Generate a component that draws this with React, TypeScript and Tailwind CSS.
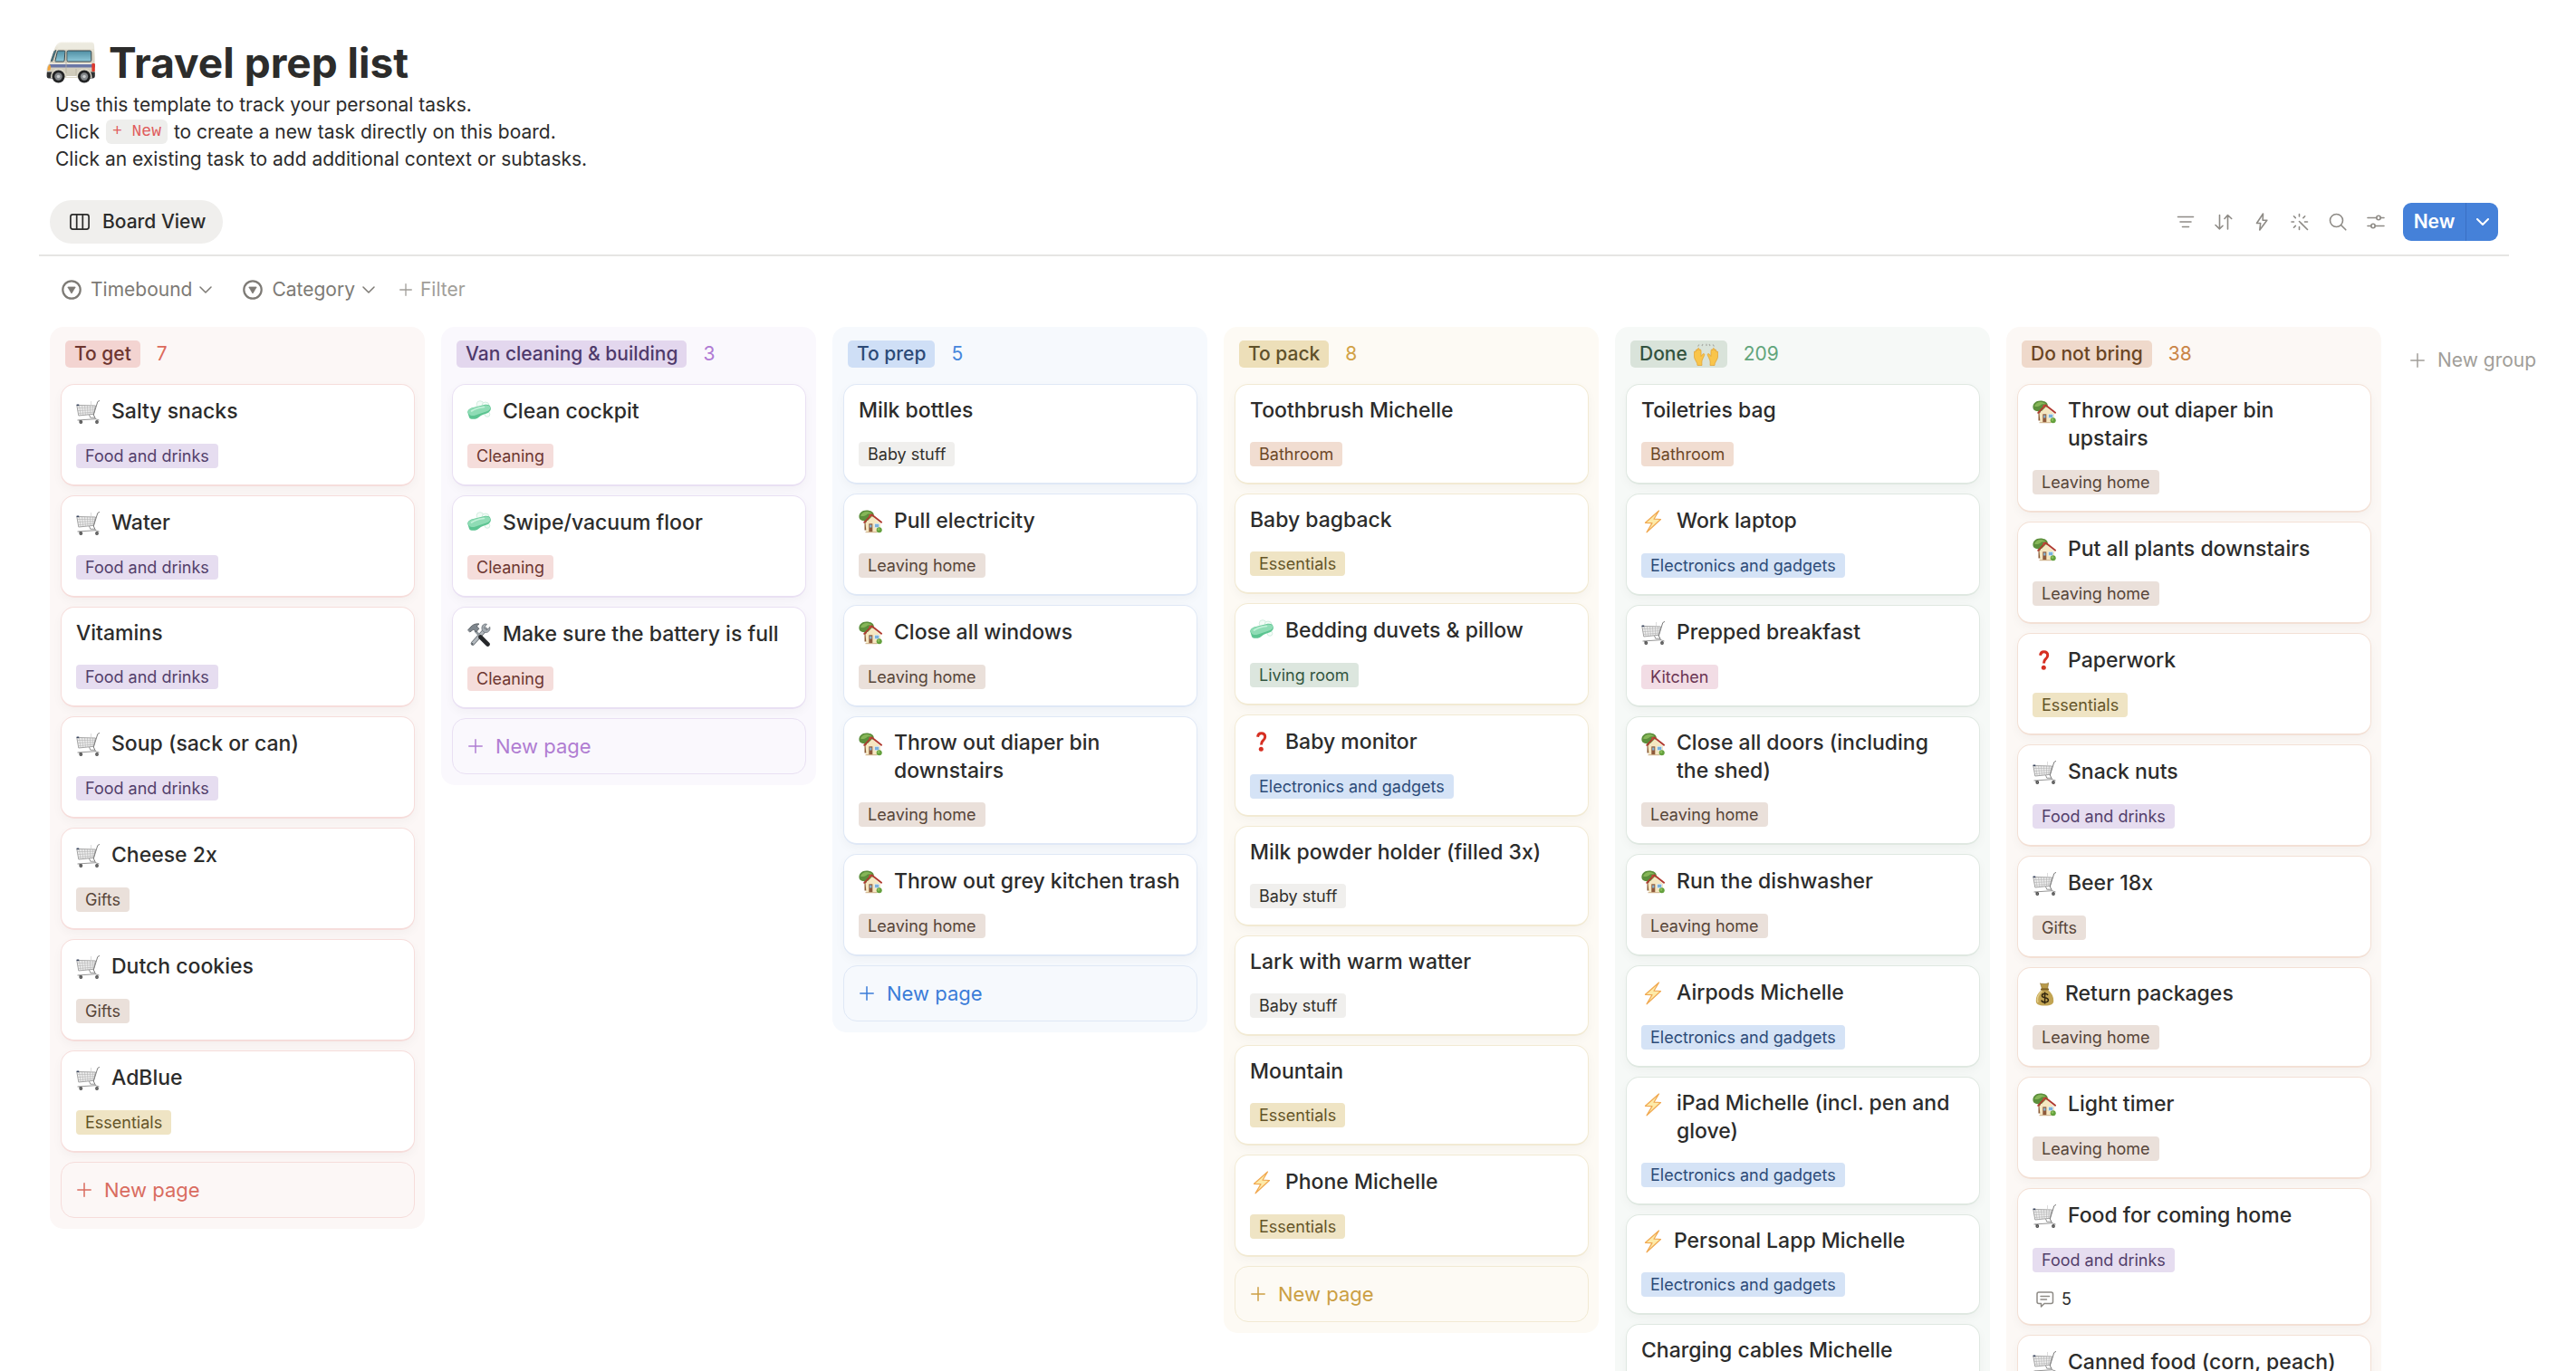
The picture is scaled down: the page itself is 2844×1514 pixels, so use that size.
import React from 'react';
import clsx from 'clsx';

type Tone = 'red' | 'purple' | 'blue' | 'yellow' | 'green' | 'orange' | 'gray' | 'brown' | 'pink';
type IconName = 'cart' | 'soap' | 'tools' | 'house' | 'question' | 'bolt' | 'money';

interface Card {
    title: string;
    tag: string;
    icon?: IconName;
    // emoji typed into the title instead of being set as the page icon
    inline?: boolean;
    comments?: number;
}

interface Group {
    name: string;
    count: number;
    hands?: boolean;
    canAdd?: boolean;
    styles: { column: string; label: string; count: string; border: string; add: string };
    cards: Card[];
}

const TAG_TONE: Record<string, Tone> = {
    'Food and drinks': 'purple',
    'Gifts': 'brown',
    'Essentials': 'yellow',
    'Cleaning': 'red',
    'Baby stuff': 'gray',
    'Leaving home': 'brown',
    'Bathroom': 'orange',
    'Living room': 'green',
    'Electronics and gadgets': 'blue',
    'Kitchen': 'pink',
};

const TONE_CLASS: Record<Tone, string> = {
    red: 'bg-[#f5dddb] text-[#6d3630]',
    purple: 'bg-[#e6ddf0] text-[#53406b]',
    blue: 'bg-[#d5e3f6] text-[#2d4b78]',
    yellow: 'bg-[#efe4c4] text-[#655529]',
    green: 'bg-[#dce6de] text-[#345641]',
    orange: 'bg-[#f1ddd1] text-[#6d4828]',
    gray: 'bg-[#f0efed] text-[#32302c]',
    brown: 'bg-[#eae0da] text-[#574539]',
    pink: 'bg-[#f2dde5] text-[#6b3553]',
};

const GROUPS: Group[] = [
    {
        name: 'To get',
        count: 7,
        canAdd: true,
        styles: {
            column: 'bg-[#fcf7f6]',
            label: 'bg-[#f3d4d1] text-[#6d3630]',
            count: 'text-[#dc6a5c]',
            border: 'border-[#f6dddb]',
            add: 'text-[#d96c5f]',
        },
        cards: [
            { title: 'Salty snacks', tag: 'Food and drinks', icon: 'cart' },
            { title: 'Water', tag: 'Food and drinks', icon: 'cart' },
            { title: 'Vitamins', tag: 'Food and drinks' },
            { title: 'Soup (sack or can)', tag: 'Food and drinks', icon: 'cart' },
            { title: 'Cheese 2x', tag: 'Gifts', icon: 'cart' },
            { title: 'Dutch cookies', tag: 'Gifts', icon: 'cart' },
            { title: 'AdBlue', tag: 'Essentials', icon: 'cart' },
        ],
    },
    {
        name: 'Van cleaning & building',
        count: 3,
        canAdd: true,
        styles: {
            column: 'bg-[#faf8fd]',
            label: 'bg-[#e3d7ee] text-[#4f3a6b]',
            count: 'text-[#b07ad4]',
            border: 'border-[#e9e0f3]',
            add: 'text-[#b07dd2]',
        },
        cards: [
            { title: 'Clean cockpit', tag: 'Cleaning', icon: 'soap' },
            { title: 'Swipe/vacuum floor', tag: 'Cleaning', icon: 'soap' },
            { title: 'Make sure the battery is full', tag: 'Cleaning', icon: 'tools' },
        ],
    },
    {
        name: 'To prep',
        count: 5,
        canAdd: true,
        styles: {
            column: 'bg-[#f6f9fd]',
            label: 'bg-[#cfdff6] text-[#2c4a76]',
            count: 'text-[#4686dc]',
            border: 'border-[#dfe8f6]',
            add: 'text-[#3b7cd8]',
        },
        cards: [
            { title: 'Milk bottles', tag: 'Baby stuff' },
            { title: 'Pull electricity', tag: 'Leaving home', icon: 'house' },
            { title: 'Close all windows', tag: 'Leaving home', icon: 'house' },
            { title: 'Throw out diaper bin downstairs', tag: 'Leaving home', icon: 'house' },
            { title: 'Throw out grey kitchen trash', tag: 'Leaving home', icon: 'house' },
        ],
    },
    {
        name: 'To pack',
        count: 8,
        canAdd: true,
        styles: {
            column: 'bg-[#fdfaf4]',
            label: 'bg-[#eddfb9] text-[#60512a]',
            count: 'text-[#d2a247]',
            border: 'border-[#f2ead3]',
            add: 'text-[#cb9f43]',
        },
        cards: [
            { title: 'Toothbrush Michelle', tag: 'Bathroom' },
            { title: 'Baby bagback', tag: 'Essentials' },
            { title: 'Bedding duvets & pillow', tag: 'Living room', icon: 'soap' },
            { title: 'Baby monitor', tag: 'Electronics and gadgets', icon: 'question' },
            { title: 'Milk powder holder (filled 3x)', tag: 'Baby stuff' },
            { title: 'Lark with warm watter', tag: 'Baby stuff' },
            { title: 'Mountain', tag: 'Essentials' },
            { title: 'Phone Michelle', tag: 'Essentials', icon: 'bolt' },
        ],
    },
    {
        name: 'Done',
        count: 209,
        hands: true,
        styles: {
            column: 'bg-[#f6f9f7]',
            label: 'bg-[#d9e3da] text-[#33533f]',
            count: 'text-[#62a57c]',
            border: 'border-[#dfe8e1]',
            add: 'text-[#62a57c]',
        },
        cards: [
            { title: 'Toiletries bag', tag: 'Bathroom' },
            { title: 'Work laptop', tag: 'Electronics and gadgets', icon: 'bolt' },
            { title: 'Prepped breakfast', tag: 'Kitchen', icon: 'cart' },
            { title: 'Close all doors (including the shed)', tag: 'Leaving home', icon: 'house' },
            { title: 'Run the dishwasher', tag: 'Leaving home', icon: 'house' },
            { title: 'Airpods Michelle', tag: 'Electronics and gadgets', icon: 'bolt' },
            { title: 'iPad Michelle (incl. pen and glove)', tag: 'Electronics and gadgets', icon: 'bolt' },
            { title: 'Personal Lapp Michelle', tag: 'Electronics and gadgets', icon: 'bolt', inline: true },
            { title: 'Charging cables Michelle', tag: 'Electronics and gadgets' },
        ],
    },
    {
        name: 'Do not bring',
        count: 38,
        styles: {
            column: 'bg-[#fcf8f5]',
            label: 'bg-[#efd9cb] text-[#6a4523]',
            count: 'text-[#ca8547]',
            border: 'border-[#f3e0d5]',
            add: 'text-[#ca8547]',
        },
        cards: [
            { title: 'Throw out diaper bin upstairs', tag: 'Leaving home', icon: 'house' },
            { title: 'Put all plants downstairs', tag: 'Leaving home', icon: 'house' },
            { title: 'Paperwork', tag: 'Essentials', icon: 'question' },
            { title: 'Snack nuts', tag: 'Food and drinks', icon: 'cart' },
            { title: 'Beer 18x', tag: 'Gifts', icon: 'cart' },
            { title: 'Return packages', tag: 'Leaving home', icon: 'money', inline: true },
            { title: 'Light timer', tag: 'Leaving home', icon: 'house' },
            { title: 'Food for coming home', tag: 'Food and drinks', icon: 'cart', comments: 5 },
            { title: 'Canned food (corn, peach)', tag: 'Food and drinks', icon: 'cart' },
        ],
    },
];

/* ---------- emoji drawings, 26x26 unless noted ---------- */

function VanIcon() {
    return (
        <svg viewBox="0 0 54 46" className="w-[54px] h-[46px] flex-shrink-0" aria-hidden="true">
            <defs>
                <linearGradient id="vanGlass" x1="0" y1="0" x2="0" y2="1">
                    <stop offset="0" stopColor="#4f8ea3" />
                    <stop offset="1" stopColor="#8fc9da" />
                </linearGradient>
                <linearGradient id="vanBody" x1="0" y1="0" x2="0" y2="1">
                    <stop offset="0" stopColor="#f4f2ea" />
                    <stop offset=".35" stopColor="#dcd7c6" />
                    <stop offset="1" stopColor="#cfcbbb" />
                </linearGradient>
            </defs>
            <path d="M16 .5h34c2 0 2.800 1 3 3l.6 14V38H2L.6 32c0-4 1-6 3-8l4-11C9.500 6 12 1 16 .5z" fill="url(#vanBody)" />
            <path d="M16.500 1.500h33.500c1.500 0 2 .7 2.200 2l.3 4.500H12.500c.8-3.500 2-6 4-6.500z" fill="#eceadf" />
            <path d="M4 25h50v3.600H3z" fill="#6a76a6" />
            <path d="M3.500 24.500h50" stroke="#f3f1ea" strokeWidth="1.200" />
            <path d="M8.500 11.500c.6-1.500 1.500-2 2.500-2L6.800 21.500H5.200z" fill="#4f8ea3" stroke="#39464c" strokeWidth=".8" />
            <path d="M13.500 10h6.200c1 0 1.300.4 1.200 1.300l-.8 9.400c0 .9-.5 1.300-1.300 1.300h-8c-.8 0-1-.5-.8-1.200l2.300-9.600c.2-.8.600-1.200 1.200-1.200z" fill="url(#vanGlass)" stroke="#39464c" strokeWidth="1" />
            <rect x="22.800" y="10" width="27" height="12" rx="1.600" fill="url(#vanGlass)" stroke="#39464c" strokeWidth="1" />
            <path d="M22 9v26M33 30v7" stroke="#b5b1a2" strokeWidth=".8" />
            <path d="M3.500 25.500c1.600.4 1.800 2 1 6l-3 .5c0-3 .6-5 2-6.500z" fill="#f2a33a" />
            <rect x="50.400" y="24" width="3.400" height="9" rx=".8" fill="#e0392b" />
            <path d="M.8 33.500h6v7H3c-1.700 0-2.400-1-2.400-3zM46 33.500h7.800V38c0 1.500-.8 2.500-2.300 2.500H46z" fill="#2f3133" />
            <path d="M5 40c0-7 3.500-10 8.500-10S22 33 22.500 39h11C34 33 37 30 42 30s8.500 3 8.500 10" fill="#dedacb" />
            <circle cx="13.500" cy="38.500" r="7" fill="#232425" />
            <circle cx="13.500" cy="38.500" r="4.200" fill="#85898c" />
            <circle cx="13.500" cy="38.500" r="1.800" fill="#c9cccd" />
            <circle cx="42" cy="38.500" r="7" fill="#232425" />
            <circle cx="42" cy="38.500" r="4.200" fill="#85898c" />
            <circle cx="42" cy="38.500" r="1.800" fill="#c9cccd" />
        </svg>
    );
}

function CartIcon() {
    return (
        <g fill="none">
            <path d="M.8 5.500L21.500 6 19.300 15.300 2.800 17z" fill="#f0f0f0" stroke="#8d8d8d" strokeWidth=".8" />
            <path d="M3.500 5.500l1.600 11M6.500 5.500l1.300 11M9.500 5.600l.9 10.600M12.500 5.700l.5 10.200M15.500 5.800l0 9.800M18.500 5.900l-.8 9.500M1.300 8.500l19.600-.2M1.800 11.500l18.500-.9M2.300 14.500l17.400-1.400" stroke="#b0b0b0" strokeWidth=".6" />
            <path d="M.6 5.200l2.600.2" stroke="#39455e" strokeWidth="1.600" />
            <path d="M26 .4l-2.200 1.200L19.300 16l2.200 4.600" stroke="#7d7d7d" strokeWidth="1" />
            <path d="M16.500 1v4.500" stroke="#cfcfcf" strokeWidth=".7" />
            <path d="M14.500 16l1.300 3.200h5M1.500 22l20-1.300 4 1.300M3 22l2.500 1.500" stroke="#8a8a8a" strokeWidth=".9" />
            <circle cx="5.300" cy="24" r="1.900" fill="#4b4b4b" />
            <circle cx="23" cy="24" r="1.900" fill="#4b4b4b" />
            <circle cx="5.300" cy="24" r=".6" fill="#c9c9c9" />
            <circle cx="23" cy="24" r=".6" fill="#c9c9c9" />
        </g>
    );
}

function SoapIcon() {
    return (
        <g>
            <circle cx="14" cy="4.500" r="3.800" fill="#f3fcf7" stroke="#c4e6d6" strokeWidth=".7" />
            <circle cx="20" cy="6" r="4" fill="#f3fcf7" stroke="#c4e6d6" strokeWidth=".7" />
            <circle cx="22" cy="15.500" r="2.800" fill="#f6fdf9" stroke="#c4e6d6" strokeWidth=".7" />
            <path d="M.3 13.500c-.4-2 1.200-3.500 4.200-5L18 5.200c4.500-.9 7.300 0 7.800 3.300.4 2.300-1 4.300-3.800 5.700l-5 1.800c-3 1-5 4.200-8.500 4.700-3 .4-5.500.2-6.500-1.700z" fill="#5cc491" />
            <path d="M.8 12.500C1 11 2.500 9.700 5 8.700L18.500 5.700c4-.7 6.500.3 6.700 2.500.2 1.800-1.500 3.300-4.400 4.300L9 16.500c-4 1.200-8 .5-8.200-4z" fill="#8fdcb5" />
            <path d="M4.500 12c3-2 9-4 14-4.500" stroke="#c4f1da" strokeWidth="1.600" fill="none" strokeLinecap="round" />
        </g>
    );
}

function ToolsIcon() {
    return (
        <g fill="none" strokeLinecap="round">
            <path d="M20 7L6 22.500" stroke="#6f757b" strokeWidth="4.600" />
            <path d="M20 7L6 22.500" stroke="#b3b9be" strokeWidth="2.800" />
            <path d="M24.800 4.800l-3.700 3-2.600-2.500 3-4C18.500.3 15.500 2.500 16 6.500c.3 3.500 4 5 6.500 3.500 2-1.200 3-3.200 2.300-5.200z" fill="#a4abb1" stroke="#6a7076" strokeWidth=".8" />
            <path d="M9 9l8 8.500" stroke="#8e959b" strokeWidth="2.600" />
            <path d="M14.500 15.500l8 8" stroke="#26282a" strokeWidth="4.600" />
            <path d="M.8 7.500L4 4c2-2.300 5.500-3.700 9-3l-2.500 2c.4 1.600 1.300 2.400 2.500 3.200L9.500 10 7.500 7.500c-1.500-.2-2.200.2-3 1.500l-1.700.8z" fill="#7f878e" stroke="#50565b" strokeWidth=".8" strokeLinejoin="round" />
            <circle cx="5.500" cy="23" r="1" fill="#555b60" />
        </g>
    );
}

function HouseIcon() {
    return (
        <g>
            <path d="M6.500 12h2.700v10.500H6.500z" fill="#8a5a34" />
            <path d="M.4 8C.2 4 3.500.6 8.500.6S17 2.800 16.800 6c0 3.500-3 6-8.300 6.300C4.500 12.600.6 11.500.4 8z" fill="#5c8f3c" />
            <path d="M2 6.500C3 3.500 6 1.800 9 1.900c3 .1 5 1.300 6 3-3-1-5-.5-6.500.8C6.500 7 4 7.500 2 6.500z" fill="#86b658" />
            <path d="M7.500 14.500L15 7l9 8v9.500l-15.500.3z" fill="#f5e7c1" />
            <path d="M5.600 14.500L14.300 5.300 25.700 14.200" fill="none" stroke="#b03a30" strokeWidth="1.800" strokeLinejoin="round" />
            <path d="M11.500 5h2v2.500l-2 1.500z" fill="#c4473a" />
            <rect x="11.300" y="15.300" width="4" height="9" fill="#8f5a3c" />
            <rect x="12.200" y="16.500" width="2.200" height="3" fill="#86b6d8" />
            <rect x="17.700" y="15.300" width="5" height="4.300" fill="#79b1dd" stroke="#e9f2f8" strokeWidth=".6" />
            <path d="M7.500 24.700h13" stroke="#c6a77c" strokeWidth=".9" />
            <circle cx="22.700" cy="22.200" r="3" fill="#64a03d" />
            <circle cx="22" cy="21.500" r="1.300" fill="#8cc15c" />
        </g>
    );
}

function QuestionIcon() {
    return (
        <g>
            <path d="M8.500 6.700c.4-2.700 1.900-3.900 4-3.900 2.500 0 4.200 1.500 4.200 4 0 2.300-1.500 3.300-2.800 4.500-1 .9-1.300 2.200-1.400 4.200" fill="none" stroke="#d62f22" strokeWidth="3" />
            <circle cx="12.300" cy="20.300" r="2.500" fill="#d62f22" />
        </g>
    );
}

function BoltIcon() {
    return (
        <path d="M19.500 1L4.500 14.300l7.500.3L6 24.800 21.500 10.500l-7.500-.3z" fill="#fdeaa8" stroke="#f0a850" strokeWidth="1.200" strokeLinejoin="round" />
    );
}

function MoneyIcon() {
    return (
        <g>
            <path d="M8.500.8c1.500 1 2.500.2 3.500.5s2.500.5 5.700-.8L16.500 7h-6z" fill="#b89a4a" stroke="#8a6d2c" strokeWidth=".6" />
            <path d="M10 8h7c4.500 4 6.500 8 6.200 12.500-.2 3.500-2.500 5-9.700 5s-9.500-1.500-9.700-5C3.500 16 5.500 12 10 8z" fill="#c2a453" />
            <path d="M6 22c-1.500-4 .5-9 4.500-13" fill="none" stroke="#e3cd86" strokeWidth="1.600" />
            <path d="M9.800 7.500h7.400" stroke="#7c5f24" strokeWidth="1.800" strokeLinecap="round" />
            <path d="M17 14c-.6-1.200-1.800-1.800-3.400-1.800-2 0-3.200.9-3.200 2.300 0 3.300 7 1.300 7 4.800 0 1.500-1.500 2.500-3.700 2.500-2 0-3.500-.8-3.900-2.300M13.600 10.500v13" fill="none" stroke="#33270f" strokeWidth="1.500" />
        </g>
    );
}

function HandsIcon() {
    return (
        <svg viewBox="0 0 27 25" className="w-[27px] h-[25px]" aria-hidden="true">
            <path d="M4.500 3.500L6 1.500M9 3L10 1M14 3V.8M18 3L17 1M22.500 3.500L21 1.500" stroke="#a8aaa5" strokeWidth="1.200" />
            <path d="M4 24.500c.3-3-3-6-3.500-9l-.2-5.500c0-1.300 1.400-1.300 1.700-.2L2.300 8c.2-1.500 1.600-1.500 1.800 0l.2-1.500c.2-1.400 1.700-1.300 1.800.1l.2 1.400c.3-1.300 1.700-1.200 1.700.2l.1 6.300 1.700-2.300c1-1.200 2.400-.4 1.900 1L9.500 18c-.8 2-.7 4-.5 6.500z" fill="#f9c54b" stroke="#e19e2c" strokeWidth=".7" />
            <path d="M23 24.500c-.3-3 3-6 3.500-9l.2-5.500c0-1.300-1.400-1.300-1.700-.2L24.700 8c-.2-1.500-1.600-1.500-1.800 0l-.2-1.500c-.2-1.400-1.700-1.300-1.800.1l-.2 1.400c-.3-1.300-1.700-1.200-1.700.2l-.1 6.300-1.700-2.300c-1-1.200-2.400-.4-1.900 1l2.200 4.800c.8 2 .7 4 .5 6.500z" fill="#f9c54b" stroke="#e19e2c" strokeWidth=".7" />
        </svg>
    );
}

const ICONS: Record<IconName, () => React.JSX.Element> = {
    cart: CartIcon,
    soap: SoapIcon,
    tools: ToolsIcon,
    house: HouseIcon,
    question: QuestionIcon,
    bolt: BoltIcon,
    money: MoneyIcon,
};

function PageIcon({ name, inline }: { name: IconName; inline?: boolean }) {
    const Drawing = ICONS[name];
    return (
        <svg viewBox="0 0 26 26" className={clsx('w-[26px] h-[26px] flex-shrink-0', inline ? 'mt-[3px]' : 'mt-1')} aria-hidden="true">
            <Drawing />
        </svg>
    );
}

/* ---------- line icons ---------- */

function PlusIcon({ className }: { className: string }) {
    return (
        <svg viewBox="0 0 16 16" className={className} fill="none" stroke="currentColor" strokeWidth="1.500" strokeLinecap="round" aria-hidden="true">
            <path d="M8 .8v14.400M.8 8h14.400" />
        </svg>
    );
}

function ChevronIcon({ className }: { className: string }) {
    return (
        <svg viewBox="0 0 14 8" className={className} fill="none" stroke="currentColor" strokeLinecap="round" strokeLinejoin="round" aria-hidden="true">
            <path d="M1 1l6 6 6-6" />
        </svg>
    );
}

const TOOLBAR: { label: string; drawing: React.ReactNode }[] = [
    { label: 'Filter', drawing: <path d="M1.500 4.500h17M4 10h12M6.500 15.500h7" /> },
    {
        label: 'Sort',
        drawing: <path d="M5.500 2.500v15M1 13.500l4.500 4.300L9 14.300M14.500 18V3M11 6.500l3.500-4 4.200 4" />,
    },
    { label: 'Automations', drawing: <path d="M11.500 1L4.500 11.500h4.200L7.800 19l8-10.800h-4.600z" /> },
    {
        label: 'AI autofill',
        drawing: <path d="M9.500 9.500l9 9M9.500 1.500v2.500M9.500 15.500v3M1 10h2.500M15.500 10h3M3.500 3.800l1.800 1.800M15.700 3.800l-1.800 1.800M3.500 16.200l1.800-1.800" />,
    },
    { label: 'Search', drawing: <><circle cx="8.500" cy="8.500" r="7" /><path d="M13.500 13.500l5.300 5.300" /></> },
    {
        label: 'Settings',
        drawing: <><path d="M1 5.500h9.800M15.200 5.500h3.800M1 14.500h3.800M9.200 14.500h9.800" /><circle cx="13" cy="5.500" r="2.200" /><circle cx="7" cy="14.500" r="2.200" /></>,
    },
];

function FilterPill({ label }: { label: string }) {
    return (
        <button type="button" className="flex items-center text-[#7d7a75]">
            <svg viewBox="0 0 22 22" className="w-[22px] h-[22px] mr-[10px]" aria-hidden="true">
                <circle cx="11" cy="11" r="9.700" fill="none" stroke="currentColor" strokeWidth="2.200" />
                <path d="M6.800 8h8.400L11 15z" fill="currentColor" stroke="currentColor" strokeWidth=".8" strokeLinejoin="round" />
            </svg>
            {label}
            <ChevronIcon className="w-[14px] h-[8px] ml-2 stroke-[1.5]" />
        </button>
    );
}

function BoardCard({ card, border }: { card: Card; border: string }) {
    const asPageIcon = card.icon && !card.inline;
    return (
        <article className={clsx('bg-white border border-b-2 rounded-[15px] pt-[13px] pb-[18px] pl-4 pr-[18px] shadow-[0_4px_12px_rgba(25,25,25,0.035)]', border)}>
            <div className={clsx('flex items-start', asPageIcon ? 'gap-[13px] min-h-[33px]' : 'gap-[10px] min-h-[31px]')}>
                {card.icon && <PageIcon name={card.icon} inline={card.inline} />}
                <h3 className="self-center text-[23px] leading-[31px] font-medium">{card.title}</h3>
            </div>
            <div className="mt-[19px] flex">
                <span className={clsx('h-[27px] leading-[27px] px-[10px] rounded-[4px] text-lg whitespace-nowrap', TONE_CLASS[TAG_TONE[card.tag]])}>{card.tag}</span>
            </div>
            {card.comments && (
                <div className="mt-5 ml-1 h-[19px] flex items-center gap-2 text-lg">
                    <svg viewBox="0 0 20 18" className="w-5 h-[18px]" fill="none" stroke="#8e8b86" strokeWidth="1.500" strokeLinejoin="round" strokeLinecap="round" aria-hidden="true">
                        <path d="M3 1h13.500c1.300 0 2 .7 2 2v8.500c0 1.300-.7 2-2 2H9L5.500 17v-3.500H3c-1.300 0-2-.7-2-2V3c0-1.300.7-2 2-2z" />
                        <path d="M5 5.500h9.500M5 9h6.500" />
                    </svg>
                    {card.comments}
                </div>
            )}
        </article>
    );
}

function BoardColumn({ group }: { group: Group }) {
    const { styles } = group;
    return (
        <section className={clsx('w-[414px] flex-shrink-0 rounded-[15px] pl-3 pr-[11px] pt-[15px] pb-3', styles.column)}>
            <header className="flex items-center gap-[18px] pl-[5px] mb-[18px] text-[21px] leading-[30px]">
                <h2 className={clsx('flex items-center gap-[7px] h-[30px] px-[10px] rounded-[5px] font-medium', styles.label)}>
                    {group.name}
                    {group.hands && <HandsIcon />}
                </h2>
                <span className={styles.count}>{group.count}</span>
            </header>
            <div className="flex flex-col gap-[10px]">
                {group.cards.map((card) => (
                    <BoardCard key={card.title} card={card} border={styles.border} />
                ))}
                {group.canAdd && (
                    <button type="button" className={clsx('h-[62px] border rounded-[15px] px-[17px] flex items-center gap-[14px] text-[22px]', styles.border, styles.add)}>
                        <PlusIcon className="w-4 h-4" />
                        New page
                    </button>
                )}
            </div>
        </section>
    );
}

export default function App() {
    return (
        <main className="h-screen overflow-hidden bg-white text-[#2c2c2b] pt-[41px] font-['Inter','Liberation_Sans',sans-serif]">
            {/* PAGE HEADER */}
            <div className="pl-[43px] pr-[74px]">
                <div className="flex items-center gap-[15px] pl-2">
                    <VanIcon />
                    <h1 className="text-[46px] leading-[56px] font-bold">Travel prep list</h1>
                </div>
                <div className="mt-1 pl-[18px] text-[21px] leading-[30px]">
                    <p>Use this template to track your personal tasks.</p>
                    <p>
                        Click <code className="inline-block align-top h-[27px] leading-[27px] mt-px mx-px px-[7px] rounded-[6px] bg-[#eeeeec] text-[#e05c5c] text-lg font-['Liberation_Mono',monospace]">+ New</code> to create a new task directly on this board.
                    </p>
                    <p>Click an existing task to add additional context or subtasks.</p>
                </div>

                {/* VIEW BAR */}
                <div className="mt-[30px] px-3 pb-3 border-b-2 border-[#e6e5e3] flex items-center justify-between">
                    <button type="button" className="h-12 pl-[22px] pr-[18px] rounded-full bg-[#f0efed] flex items-center gap-[14px] text-[21px] font-medium">
                        <svg viewBox="0 0 22 18" className="w-[22px] h-[18px]" fill="none" stroke="currentColor" strokeWidth="1.700" aria-hidden="true">
                            <rect x=".9" y=".9" width="20.200" height="16.200" rx="2.500" />
                            <path d="M7.700 1v16M14.300 1v16" />
                        </svg>
                        Board View
                    </button>
                    <div className="flex items-center">
                        {TOOLBAR.map(({ label, drawing }) => (
                            <button key={label} type="button" aria-label={label} className="w-[42px] h-[42px] flex items-center justify-center text-[#8e8b86]">
                                <svg viewBox="0 0 20 20" className="w-5 h-5" fill="none" stroke="currentColor" strokeWidth="1.600" strokeLinecap="round" strokeLinejoin="round">
                                    {drawing}
                                </svg>
                            </button>
                        ))}
                        <div className="ml-[9px] h-[42px] flex rounded-[9px] overflow-hidden bg-[#4581d9] text-white">
                            <button type="button" className="w-[70px] text-[21px] font-semibold border-r border-[#3a70c4]">New</button>
                            <button type="button" aria-label="More options" className="w-[35px] flex items-center justify-center">
                                <ChevronIcon className="w-[14px] h-[8px] stroke-2" />
                            </button>
                        </div>
                    </div>
                </div>

                {/* FILTERS */}
                <div className="mt-[22px] pl-[25px] h-[30px] flex items-center text-[21px]">
                    <FilterPill label="Timebound" />
                    <div className="ml-[34px]">
                        <FilterPill label="Category" />
                    </div>
                    <button type="button" className="ml-[27px] flex items-center gap-[9px] text-[#a19e99]">
                        <PlusIcon className="w-[14px] h-[14px]" />
                        Filter
                    </button>
                </div>
            </div>

            {/* BOARD */}
            <div className="mt-[26px] pl-[55px] flex items-start gap-[18px]">
                {GROUPS.map((group) => (
                    <BoardColumn key={group.name} group={group} />
                ))}
                <button type="button" className="flex-shrink-0 mt-[22px] ml-[14px] h-[30px] flex items-center gap-[14px] text-[21px] text-[#a19e99] whitespace-nowrap">
                    <PlusIcon className="w-4 h-4" />
                    New group
                </button>
            </div>
        </main>
    );
}
